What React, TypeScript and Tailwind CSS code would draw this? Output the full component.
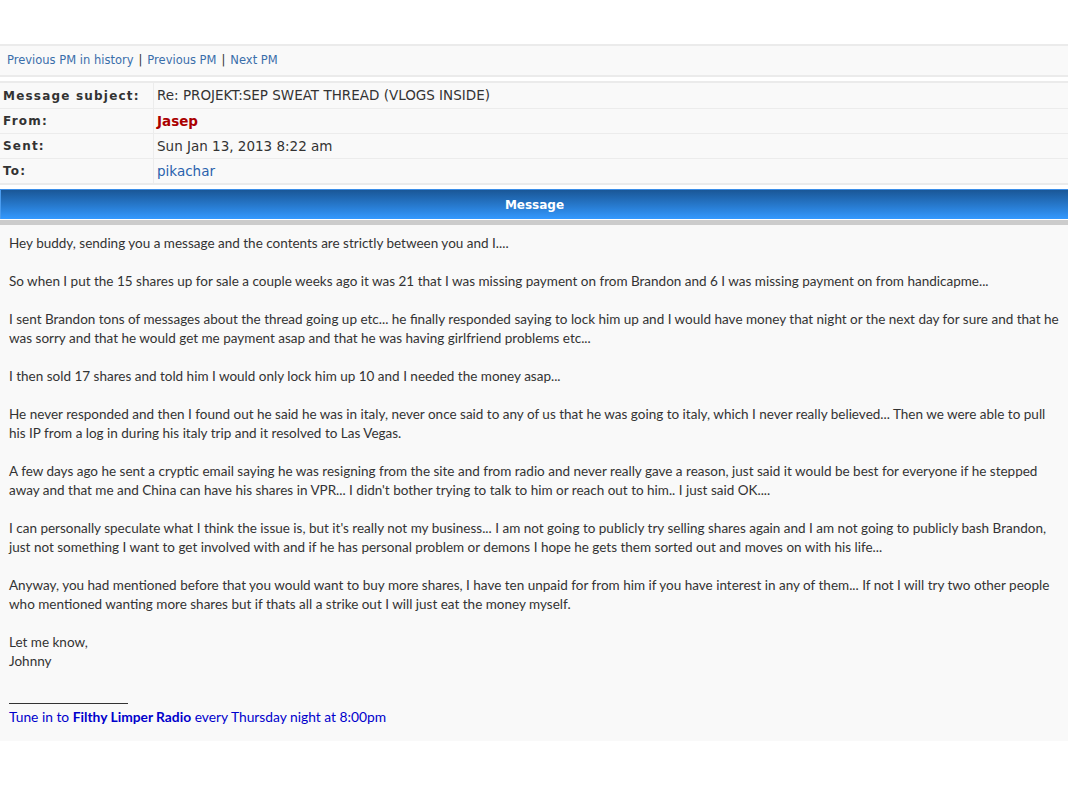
export default function App() {
  const verdana = { fontFamily: '"DejaVu Sans", Verdana, sans-serif' };
  const rows: { label: string; value: React.ReactNode }[] = [
    { label: 'Message subject:', value: <span className="text-[#333333]">Re: PROJEKT:SEP SWEAT THREAD (VLOGS INSIDE)</span> },
    { label: 'From:', value: <span className="font-bold text-[#aa0000]">Jasep</span> },
    { label: 'Sent:', value: <span className="text-[#333333]">Sun Jan 13, 2013 8:22 am</span> },
    { label: 'To:', value: <span className="text-[#2a62ad]">pikachar</span> },
  ];

  return (
    <div className="min-h-[808px] w-[1068px] bg-white">
      <div className="h-[44px]" />

      {/* nav */}
      <div className="flex h-[33px] items-center border-y-2 border-[#ebebeb] bg-[#f9f9f9] px-[7px] text-[11.5px] text-[#333]" style={verdana}>
        <span className="text-[#3a6eaa]">Previous PM in history</span>
        <span className="mx-[5px]">|</span>
        <span className="text-[#3a6eaa]">Previous PM</span>
        <span className="mx-[5px]">|</span>
        <span className="text-[#3a6eaa]">Next PM</span>
      </div>

      {/* header table */}
      <div className="mt-[4px] border-y-2 border-[#ebebeb] bg-[#f9f9f9]" style={verdana}>
        {rows.map((r, i) => (
          <div key={r.label} className={`flex h-[25px] items-center ${i > 0 ? 'border-t border-[#ececec]' : ''}`}>
            <div className="flex h-full w-[154px] items-center border-r border-[#ececec] pl-[3px] text-[12px] font-bold tracking-[1.2px] text-[#333]">
              {r.label}
            </div>
            <div className="pl-[3px] text-[13.5px]">{r.value}</div>
          </div>
        ))}
      </div>

      {/* message bar */}
      <div className="mt-[4px] border-t border-[#3b8ee8]">
        <div
          className="flex h-[29px] items-center justify-center border-l border-[#4a9cf0] bg-gradient-to-b from-[#1a5797] to-[#3399ff] text-[12px] font-bold text-white"
          style={verdana}
        >
          Message
        </div>
        <div className="h-px bg-white" />
        <div className="h-[5px] bg-[#cccccc]" />
      </div>

      {/* body */}
      <div
        className="bg-[#f9f9f9] px-[9px] pb-[15px] pt-[9px] text-[13.5px] leading-[19px] text-[#333]"
        style={{ fontFamily: '"Trebuchet MS", Lato, "Open Sans", sans-serif' }}
      >
        <p>Hey buddy, sending you a message and the contents are strictly between you and I....</p>
        <br />
        <p>So when I put the 15 shares up for sale a couple weeks ago it was 21 that I was missing payment on from Brandon and 6 I was missing payment on from handicapme...</p>
        <br />
        <p>
          I sent Brandon tons of messages about the thread going up etc... he finally responded saying to lock him up and I would have money that night or the next day for sure and that he was sorry and that he would get me payment asap and that he was having girlfriend problems etc...
        </p>
        <br />
        <p>I then sold 17 shares and told him I would only lock him up 10 and I needed the money asap...</p>
        <br />
        <p>
          He never responded and then I found out he said he was in italy, never once said to any of us that he was going to italy, which I never really believed... Then we were able to pull his IP from a log in during his italy trip and it resolved to Las Vegas.
        </p>
        <br />
        <p>
          A few days ago he sent a cryptic email saying he was resigning from the site and from radio and never really gave a reason, just said it would be best for everyone if he stepped away and that me and China can have his shares in VPR... I didn't bother trying to talk to him or reach out to him.. I just said OK....
        </p>
        <br />
        <p>
          I can personally speculate what I think the issue is, but it's really not my business... I am not going to publicly try selling shares again and I am not going to publicly bash Brandon, just not something I want to get involved with and if he has personal problem or demons I hope he gets them sorted out and moves on with his life...
        </p>
        <br />
        <p>
          Anyway, you had mentioned before that you would want to buy more shares, I have ten unpaid for from him if you have interest in any of them... If not I will try two other people who mentioned wanting more shares but if thats all a strike out I will just eat the money myself.
        </p>
        <br />
        <p>Let me know,</p>
        <p>Johnny</p>

        <div className="mt-[32px] w-[119px] border-t border-[#333]" />
        <p className="mt-[3px] text-[13.8px] text-[#0000cc]">
          Tune in to <span className="font-bold">Filthy Limper Radio</span> every Thursday night at 8:00pm
        </p>
      </div>
    </div>
  );
}
